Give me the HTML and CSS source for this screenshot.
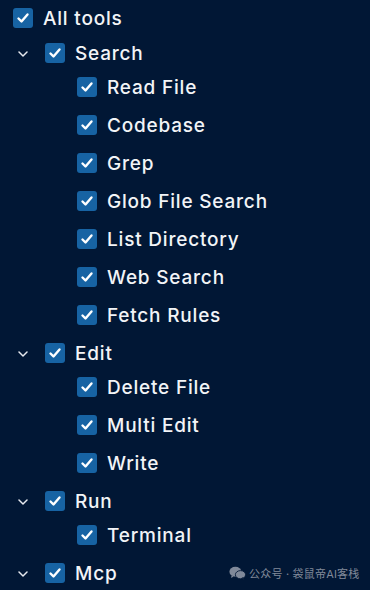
FILE: index.html
```html
<!DOCTYPE html>
<html lang="en">
<head>
  <meta charset="UTF-8">
  <title>Tools</title>
  <link rel="stylesheet" href="styles.css">
</head>
<body>
  <div class="tree">
    <div class="row">
      <span class="box"><svg viewBox="0 0 20 20"><path d="M5.5 10.5l3 3 6-7"/></svg></span>
      <span class="label">All tools</span>
    </div>

    <div class="group first">
      <div class="row level1">
        <svg class="chev" viewBox="0 0 10 6"><path d="M1 1l4 4 4-4"/></svg>
        <span class="box"><svg viewBox="0 0 20 20"><path d="M5.5 10.5l3 3 6-7"/></svg></span>
        <span class="label">Search</span>
      </div>
      <div class="children">
        <div class="row level2"><span class="box"><svg viewBox="0 0 20 20"><path d="M5.5 10.5l3 3 6-7"/></svg></span><span class="label">Read File</span></div>
        <div class="row level2"><span class="box"><svg viewBox="0 0 20 20"><path d="M5.5 10.5l3 3 6-7"/></svg></span><span class="label">Codebase</span></div>
        <div class="row level2"><span class="box"><svg viewBox="0 0 20 20"><path d="M5.5 10.5l3 3 6-7"/></svg></span><span class="label">Grep</span></div>
        <div class="row level2"><span class="box"><svg viewBox="0 0 20 20"><path d="M5.5 10.5l3 3 6-7"/></svg></span><span class="label">Glob File Search</span></div>
        <div class="row level2"><span class="box"><svg viewBox="0 0 20 20"><path d="M5.5 10.5l3 3 6-7"/></svg></span><span class="label">List Directory</span></div>
        <div class="row level2"><span class="box"><svg viewBox="0 0 20 20"><path d="M5.5 10.5l3 3 6-7"/></svg></span><span class="label">Web Search</span></div>
        <div class="row level2"><span class="box"><svg viewBox="0 0 20 20"><path d="M5.5 10.5l3 3 6-7"/></svg></span><span class="label">Fetch Rules</span></div>
      </div>
    </div>

    <div class="group">
      <div class="row level1">
        <svg class="chev" viewBox="0 0 10 6"><path d="M1 1l4 4 4-4"/></svg>
        <span class="box"><svg viewBox="0 0 20 20"><path d="M5.5 10.5l3 3 6-7"/></svg></span>
        <span class="label">Edit</span>
      </div>
      <div class="children">
        <div class="row level2"><span class="box"><svg viewBox="0 0 20 20"><path d="M5.5 10.5l3 3 6-7"/></svg></span><span class="label">Delete File</span></div>
        <div class="row level2"><span class="box"><svg viewBox="0 0 20 20"><path d="M5.5 10.5l3 3 6-7"/></svg></span><span class="label">Multi Edit</span></div>
        <div class="row level2"><span class="box"><svg viewBox="0 0 20 20"><path d="M5.5 10.5l3 3 6-7"/></svg></span><span class="label">Write</span></div>
      </div>
    </div>

    <div class="group">
      <div class="row level1">
        <svg class="chev" viewBox="0 0 10 6"><path d="M1 1l4 4 4-4"/></svg>
        <span class="box"><svg viewBox="0 0 20 20"><path d="M5.5 10.5l3 3 6-7"/></svg></span>
        <span class="label">Run</span>
      </div>
      <div class="children">
        <div class="row level2"><span class="box"><svg viewBox="0 0 20 20"><path d="M5.5 10.5l3 3 6-7"/></svg></span><span class="label">Terminal</span></div>
      </div>
    </div>

    <div class="group">
      <div class="row level1">
        <svg class="chev" viewBox="0 0 10 6"><path d="M1 1l4 4 4-4"/></svg>
        <span class="box"><svg viewBox="0 0 20 20"><path d="M5.5 10.5l3 3 6-7"/></svg></span>
        <span class="label">Mcp</span>
        <span class="watermark">
          <svg class="wechat" viewBox="0 0 20 16">
            <ellipse cx="7.5" cy="6.5" rx="7" ry="5.8"/>
            <path d="M3 11l-0.5 3 3-1.8z"/>
            <ellipse cx="13.5" cy="10" rx="6" ry="4.8" class="front"/>
            <path d="M16.5 13.5l1.5 2-3-1.2z" class="front"/>
          </svg>
          <span>公众号 · 袋鼠帝AI客栈</span>
        </span>
      </div>
    </div>
  </div>
</body>
</html>
```

FILE: styles.css
```css
body {
  margin: 0;
  background: #011735;
  font-family: Inter, "Noto Sans", "Noto Sans CJK SC", sans-serif;
  color: #f2f4f7;
  width: 370px;
  height: 590px;
  overflow: hidden;
}

.tree {
  display: flex;
  flex-direction: column;
  gap: 4px;
  padding: 1px 0 0 13px;
}

.group {
  display: flex;
  flex-direction: column;
}

.group.first {
  margin-top: -3px;
}

.children {
  display: flex;
  flex-direction: column;
  gap: 4px;
}

.row {
  display: flex;
  align-items: center;
  height: 34px;
  position: relative;
}

.level1 {
  padding-left: 32px;
}

.level2 {
  padding-left: 64px;
}

.chev {
  position: absolute;
  left: 5px;
  top: 15px;
  width: 10px;
  height: 6px;
  fill: none;
  stroke: #e6e9ee;
  stroke-width: 1.5;
  stroke-linecap: round;
  stroke-linejoin: round;
}

.box {
  width: 20px;
  height: 20px;
  border-radius: 3px;
  background: #1763a3;
  display: flex;
  flex-shrink: 0;
}

.box svg {
  width: 20px;
  height: 20px;
  fill: none;
  stroke: #ffffff;
  stroke-width: 2.4;
  stroke-linecap: round;
  stroke-linejoin: round;
}

.label {
  margin-left: 10px;
  font-size: 19px;
  font-weight: 500;
  letter-spacing: 0.8px;
  white-space: nowrap;
}

.watermark {
  position: absolute;
  left: 216px;
  top: 9px;
  display: flex;
  align-items: center;
  gap: 3px;
  font-size: 11px;
  letter-spacing: 0.2px;
  color: #808999;
  white-space: nowrap;
}

.wechat {
  width: 17px;
  height: 14px;
}

.wechat ellipse,
.wechat path {
  fill: #808999;
}

.wechat .front {
  stroke: #011735;
  stroke-width: 1;
}
```
